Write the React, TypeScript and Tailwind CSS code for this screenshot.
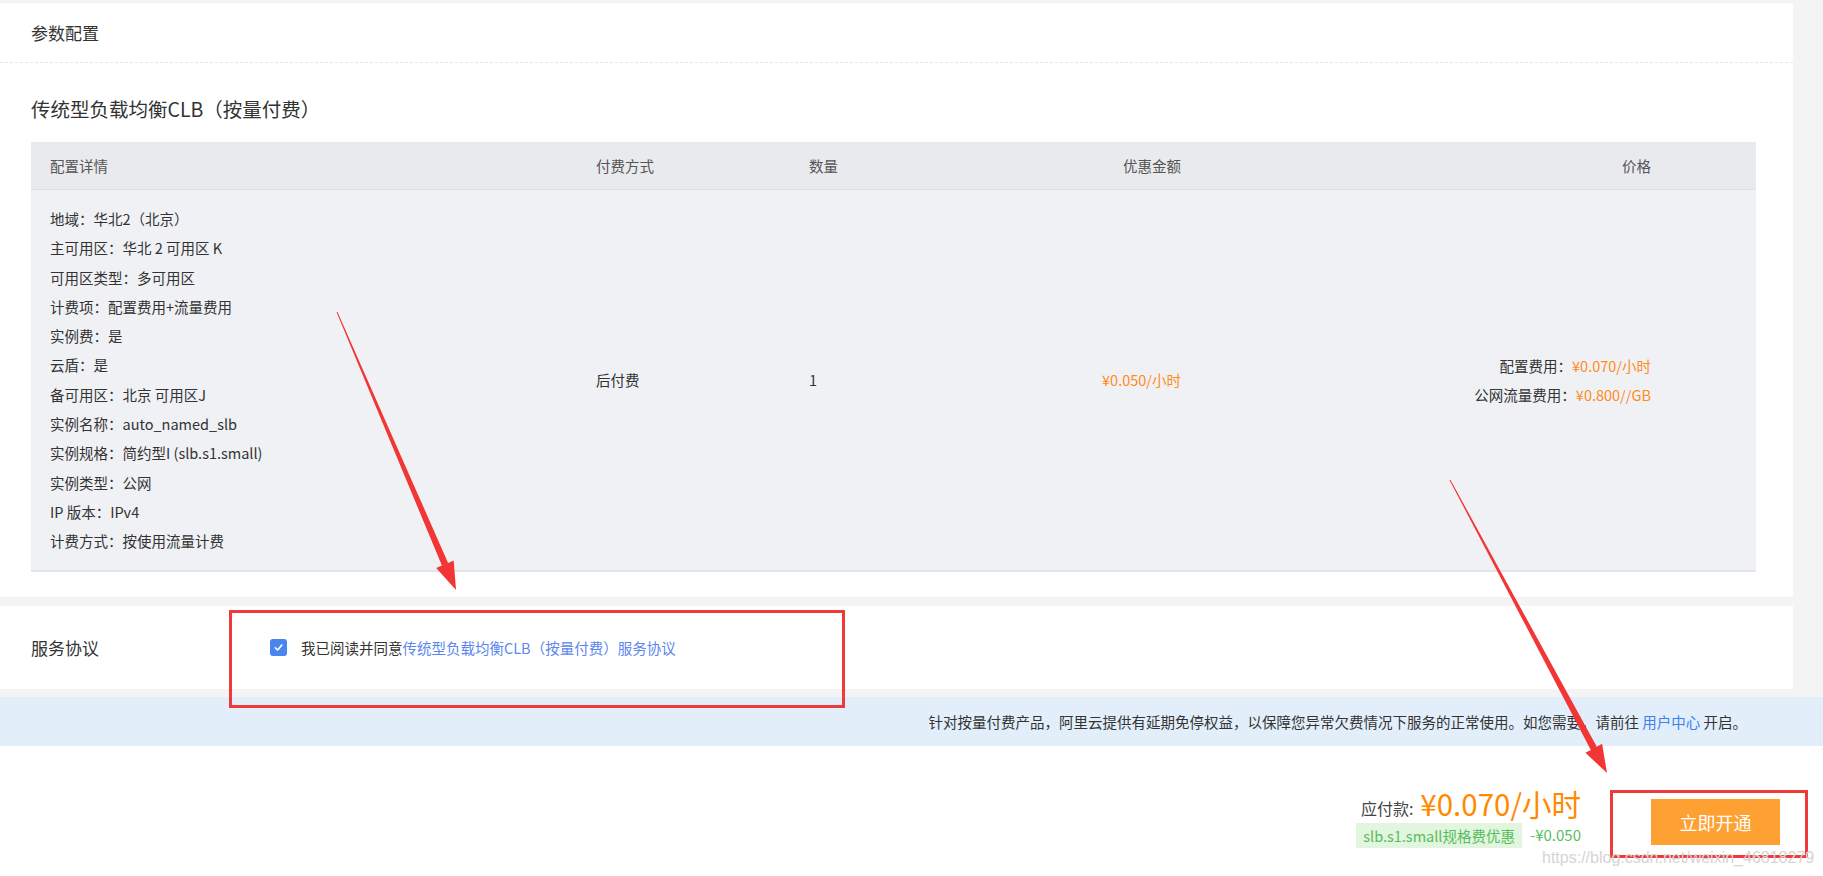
import React from 'react';

const font = "font-['Noto_Sans_CJK_SC','Noto_Sans',sans-serif]";

const details = [
  '地域：华北2（北京）',
  '主可用区：华北 2 可用区 K',
  '可用区类型：多可用区',
  '计费项：配置费用+流量费用',
  '实例费：是',
  '云盾：是',
  '备可用区：北京 可用区J',
  '实例名称：auto_named_slb',
  '实例规格：简约型I (slb.s1.small)',
  '实例类型：公网',
  'IP 版本：IPv4',
  '计费方式：按使用流量计费',
];

// tapered red arrow, thin at the tail and wide at the head
const arrowPoints = (x1: number, y1: number, x2: number, y2: number) => {
  const dx = x2 - x1;
  const dy = y2 - y1;
  const len = Math.hypot(dx, dy);
  const ux = dx / len;
  const uy = dy / len;
  const nx = -uy;
  const ny = ux;
  const headLen = 28;
  const headW = 9.5;
  const bx = x2 - ux * headLen;
  const by = y2 - uy * headLen;
  const p = (x: number, y: number) => `${x.toFixed(1)},${y.toFixed(1)}`;
  return [
    p(x1 + nx * 0.4, y1 + ny * 0.4),
    p(bx + nx * 3.4, by + ny * 3.4),
    p(bx + nx * headW, by + ny * headW),
    p(x2, y2),
    p(bx - nx * headW, by - ny * headW),
    p(bx - nx * 3.4, by - ny * 3.4),
    p(x1 - nx * 0.4, y1 - ny * 0.4),
  ].join(' ');
};

const Annotations: React.FC = () => (
  <>
    <svg className="absolute left-0 top-0 pointer-events-none" width={1823} height={876}>
      <polygon points={arrowPoints(337, 312, 456, 590)} fill="#f23535" />
      <polygon points={arrowPoints(1450, 480, 1607, 773)} fill="#f23535" />
    </svg>
    <div className="absolute left-[229px] top-[610px] w-[616px] h-[98px] border-[3px] border-[#f03a3a] pointer-events-none" />
    <div className="absolute left-[1610px] top-[790px] w-[198px] h-[68px] border-[3px] border-[#f03a3a] pointer-events-none" />
    <div className="absolute left-[1542px] top-[848px] text-[16px] leading-[20px] text-[#d4d4d4] font-['Liberation_Sans',sans-serif] pointer-events-none">
      https://blog.csdn.net/weixin_46818279
    </div>
  </>
);

const ConfigTable: React.FC = () => (
  <div className="mt-[19px] ml-[31px] mr-[37px] text-[14.5px]">
    <div className="h-[48px] bg-[#e9eaee] border-b border-[#dfe0e4] grid grid-cols-[546px_213px_191px_181px_470px] items-center pl-[19px] text-[#555]">
      <div>配置详情</div>
      <div>付费方式</div>
      <div>数量</div>
      <div className="text-right">优惠金额</div>
      <div className="text-right">价格</div>
    </div>
    <div className="bg-[#f0f1f5] border-b-2 border-[#e3e4e9] grid grid-cols-[546px_213px_191px_181px_470px] items-center pl-[19px] pt-[14px] pb-[14px] text-[#333]">
      <div className="flex flex-col">
        {details.map((d) => (
          <div key={d} className="h-[29.3px] leading-[29.3px] whitespace-nowrap">{d}</div>
        ))}
      </div>
      <div>后付费</div>
      <div>1</div>
      <div className="text-right text-[#ff8c1a]">¥0.050/小时</div>
      <div className="flex flex-col items-end">
        <div className="h-[29px] leading-[29px]">配置费用：<span className="text-[#ff8c1a]">¥0.070/小时</span></div>
        <div className="h-[29px] leading-[29px]">公网流量费用：<span className="text-[#ff8c1a]">¥0.800//GB</span></div>
      </div>
    </div>
  </div>
);

export default function App() {
  return (
    <div className={`relative w-[1823px] h-[876px] overflow-hidden bg-[#f4f4f4] text-[#333] ${font}`}>
      <div className="pt-[3px] pr-[30px]">
        {/* 参数配置 */}
        <div className="bg-white h-[594px]">
          <div className="h-[60px] flex items-center pl-[31px] text-[17px] text-[#333] border-b border-dashed border-[#e6e6e6]">
            参数配置
          </div>
          <div className="mt-[32px] pl-[31px] h-[28px] leading-[28px] text-[19.5px] text-[#333]">
            传统型负载均衡CLB（按量付费）
          </div>
          <ConfigTable />
        </div>

        {/* 服务协议 */}
        <div className="mt-[9px] bg-white h-[83px] flex items-center pl-[31px]">
          <div className="w-[239px] text-[17px] text-[#333]">服务协议</div>
          <div className="w-[17px] h-[17px] rounded-[3px] bg-[#4a84ef] flex items-center justify-center">
            <svg width="11" height="11" viewBox="0 0 12 12" fill="none">
              <path d="M2.5 6.3 L5 8.7 L9.6 3.4" stroke="white" strokeWidth="1.8" strokeLinecap="round" strokeLinejoin="round" />
            </svg>
          </div>
          <div className="ml-[14px] text-[14.5px] text-[#333]">
            我已阅读并同意<span className="text-[#5b87ee]">传统型负载均衡CLB（按量付费）服务协议</span>
          </div>
        </div>
      </div>

      {/* notice */}
      <div className="mt-[8px] h-[49px] bg-[#e2effb] flex items-center justify-end pr-[76px] text-[14.5px] text-[#333]">
        <span>
          针对按量付费产品，阿里云提供有延期免停权益，以保障您异常欠费情况下服务的正常使用。如您需要，请前往 <span className="text-[#3d7ff0]">用户中心</span> 开启。
        </span>
      </div>

      {/* footer */}
      <div className="h-[130px] bg-white flex justify-end items-start pt-[39px] pr-[43px]">
        <div className="flex flex-col items-end">
          <div className="h-[36px] flex items-end">
            <span className="text-[16px] text-[#444] leading-[20px] mb-[3px]">应付款:</span>
            <span className="ml-[7px] text-[29.5px] leading-[36px] text-[#ff8a00]">¥0.070/小时</span>
          </div>
          <div className="mt-[2px] flex items-center">
            <span className="h-[25px] px-[7px] bg-[#e1f5df] text-[#58bd5b] text-[14.5px] leading-[25px]">slb.s1.small规格费优惠</span>
            <span className="ml-[8px] text-[15px] text-[#58bd5b]">-¥0.050</span>
          </div>
        </div>
        <button className="ml-[70px] mt-[14px] w-[129px] h-[46px] bg-[#ffa033] text-white text-[18px]">
          立即开通
        </button>
      </div>

      <Annotations />
    </div>
  );
}
